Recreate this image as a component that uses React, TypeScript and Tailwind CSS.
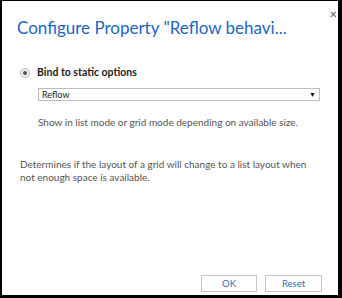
import React from 'react';

const App: React.FC = () => {
  return (
    <div className="w-[342px] h-[298px] bg-black pt-px pl-[2px] pr-[4px] pb-[3px]" style={{ fontFamily: 'Lato, "Open Sans", sans-serif' }}>
      <div className="relative w-full h-full bg-white flex flex-col">
        <button className="absolute right-[1px] top-[7px] text-[13px] leading-none text-[#555]">×</button>
        <h1 className="pl-[15px] pt-[15px] text-[17px] leading-[24px] text-[#2365c2] whitespace-nowrap">
          Configure Property "Reflow behavi...
        </h1>

        <div className="pl-[18px] pt-[25px] flex items-center gap-[7px]">
          <span className="w-[10px] h-[10px] rounded-full border border-[#b8b8b8] bg-[#eee] flex items-center justify-center">
            <span className="w-[4px] h-[4px] rounded-full bg-[#555]" />
          </span>
          <span className="text-[10.5px] font-bold text-[#222]">Bind to static options</span>
        </div>

        <div className="ml-[36px] mr-[18px] mt-[7px] h-[13px] border border-[#bdbdbd] flex items-center justify-between px-[3px]">
          <span className="text-[9px] text-[#222] leading-none">Reflow</span>
          <span className="text-[7px] text-[#111] leading-none">▼</span>
        </div>

        <p className="ml-[36px] mt-[15px] text-[10px] leading-[13px] text-[#555]">
          Show in list mode or grid mode depending on available size.
        </p>

        <p className="ml-[18px] mr-[20px] mt-[29px] text-[10px] leading-[13px] text-[#555]">
          Determines if the layout of a grid will change to a list layout when not enough space is available.
        </p>

        <div className="mt-auto mb-[3px] mr-[16px] flex justify-end gap-[8px]">
          <button className="w-[56px] h-[17px] border border-[#c6c6c6] text-[9.5px] text-[#3a6cb4] leading-none">OK</button>
          <button className="w-[57px] h-[17px] border border-[#c6c6c6] text-[9.5px] text-[#3a6cb4] leading-none">Reset</button>
        </div>
      </div>
    </div>
  );
};

export default App;
